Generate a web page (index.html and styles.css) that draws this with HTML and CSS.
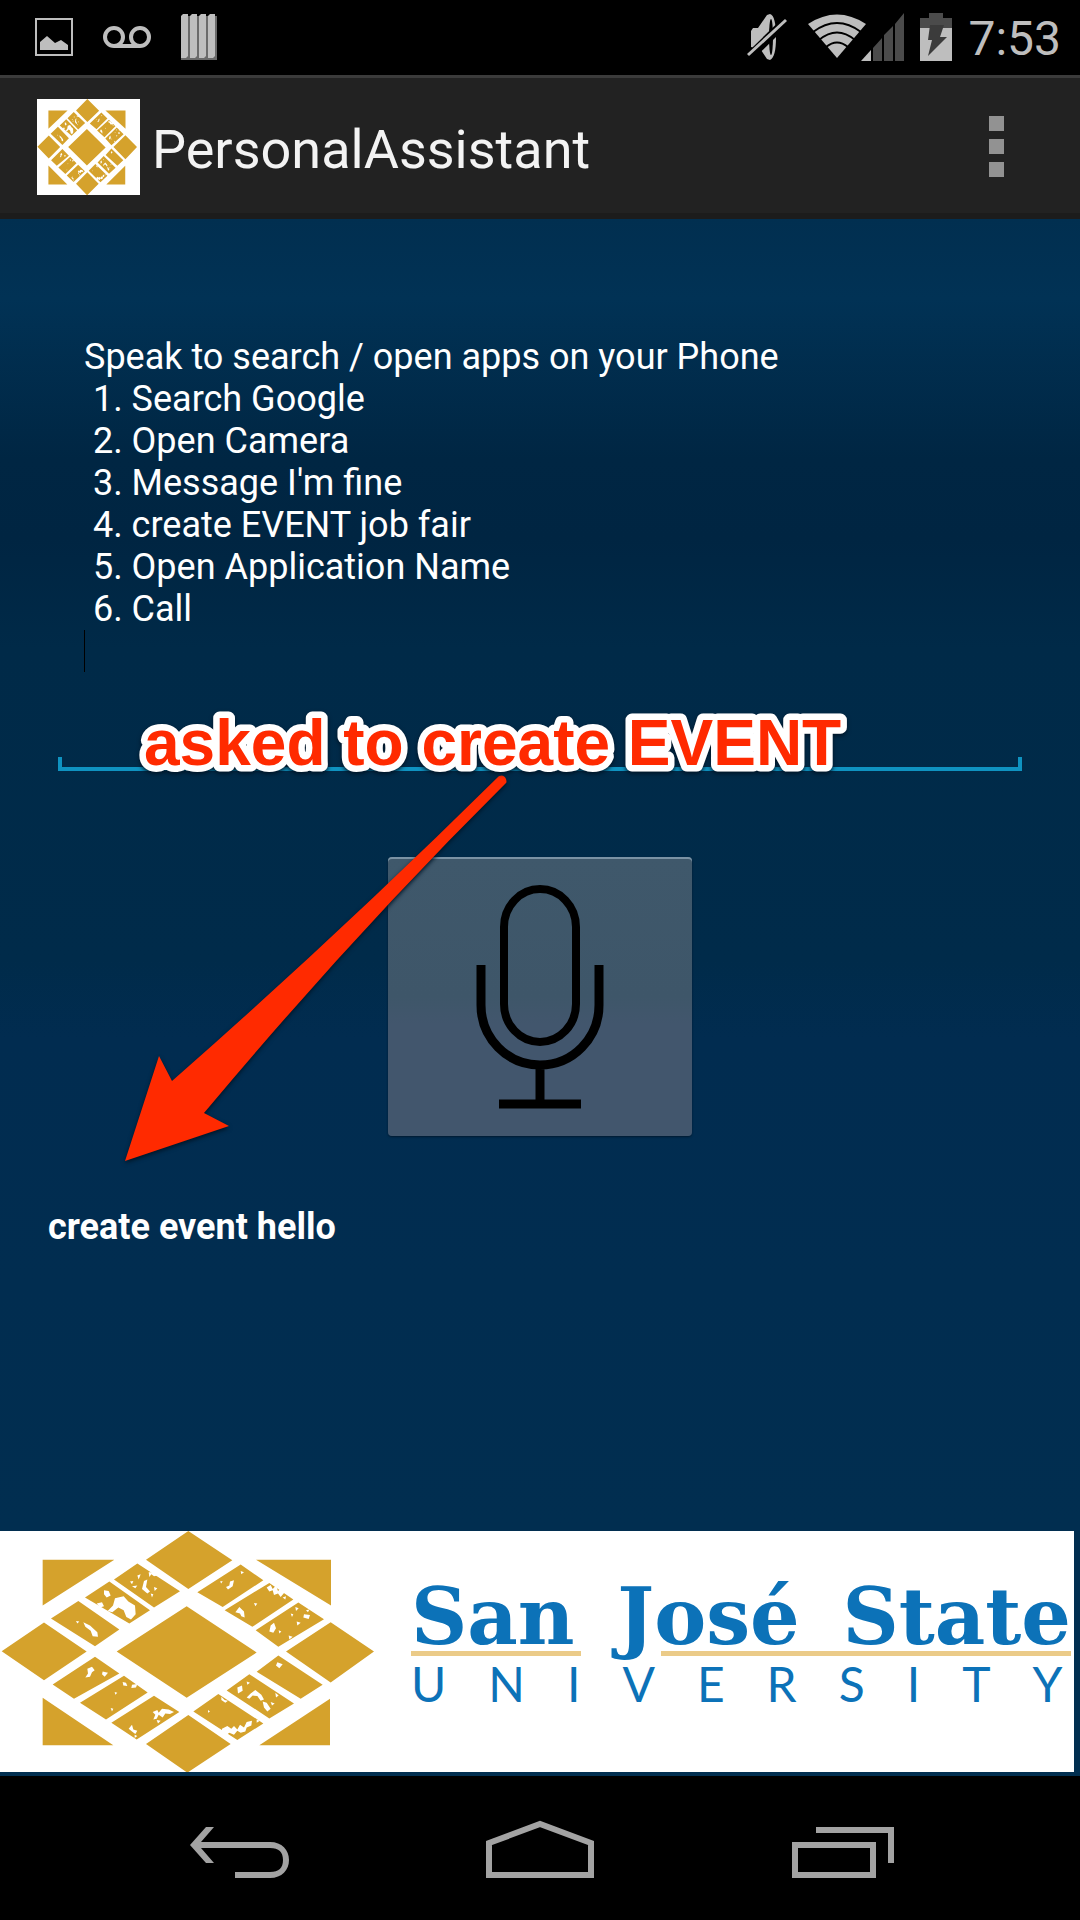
FILE: index.html
```html
<!DOCTYPE html>
<html lang="en">
<head>
<meta charset="utf-8">
<meta name="viewport" content="width=device-width, initial-scale=1">
<title>PersonalAssistant</title>
<link rel="stylesheet" href="styles.css">
</head>
<body>
<svg class="defs" aria-hidden="true">
  <symbol id="emblem" viewBox="0 62 1122 724" preserveAspectRatio="none">
    <g fill="#d5a22c">
      <path d="M565 62 697 150 565 236 438 148ZM5 423 132 337 260 424 132 510ZM858 424 992 336 1122 424 992 517ZM565 615 692 702 562 788 438 702ZM560 288 770 427 560 563 350 424Z"/>
      <path d="M128 148H343L128 286ZM768 148H993V286ZM128 563 340 706H128ZM990 566V706H778Z"/>
      <path d="M412 160 540 243 462 292 342 208ZM328 214 450 300 388 340 255 262ZM235 272 358 358 285 408 153 325Z"/>
      <path d="M722 163 790 210 668 290 592 246ZM808 218 880 268 757 350 674 300ZM895 277 972 327 835 410 767 360Z"/>
      <path d="M285 440 358 490 222 566 158 523ZM372 497 443 547 318 628 240 578ZM462 557 538 606 410 688 334 638Z"/>
      <path d="M835 436 968 524 902 566 770 485ZM748 492 882 580 808 625 680 541ZM655 552 790 640 712 690 580 604Z"/>
    </g>
    <g fill="#fff">
      <path d="M345 264l26-6 14 16 20 12 2 26-14 16-14-8-8-20-16-8-18 14-14-4 16-16zM312 240l14 2 6 14-12 6-8-10zM290 280l16-4 6 12-12 4zM432 212l10-4-4 22 12 14-8 6-16-14zM446 186l18 0 8 10-10 2-8-6-6 8zM412 196l10-4-6 16zM390 214l10-2-4 10zM462 230l10 4-8 8zM452 250l8 2-4 10zM396 228l16-2-6 8zM250 336l20 10 22 20 2 14-16-2-6-16-16-12zM228 332l10 2-6 6z"/>
      <path d="M690 214l12-4-4 18-14 10-6-8 10-4zM722 182l10 4-8 6zM660 214l8-2-4 8zM706 306l12-16 14 14 2 18-10-4-4-8zM762 278l10 2-6 8zM800 232l12-8 6 12 10-10 6 16 12-10 8 14-12 14-8-10-12 4-4-14-10 4zM848 262l10-4-2 10zM812 346l10-8 6 16-8 14-12-4zM866 376l12 4-10 8zM886 290l10 4-8 8zM912 312l18 2-4 12-16-4zM872 310l8 2-4 8zM890 334l12 4-10 8zM918 300l10-2-4 8zM836 360l8 4-6 6z"/>
      <path d="M262 476l14-6 8 10-8 6-6 14-14 2 8-12zM308 484l16 4-10 12-8-8zM368 516l10 2 4 10-12-2zM396 524l16-2-4 10-14 2zM344 546l8 2-6 6zM332 594l8 2-4 8zM458 606l14-6 4 8 10-12 20 2 16 8-12 6-14-2-8 12-12-8-6 12-10 2 6-14zM470 630l12 2-8 8zM386 656l10-12 4 14 12 4-6 10-10-8zM404 674l8 4-8 6z"/>
      <path d="M832 456l16 6-10 12-10-8zM712 532l14-6 2 16-14 8zM752 550l14-10 18 14 8 14-10 4-10-14-14-2-10 10-8-4zM788 574l12 4 12 18-10 8-10-12zM826 548l10 8-8 6zM812 576l12 4-8 6zM740 514l10 4-8 6zM664 560l10 10 10 2-8 6-12-8zM666 656l16-8 12 8 8-8 10 10 8-14 12 8 8-16 16-4-2 14-14 6-4 12-14 4-10-6-10 12-14-6-8 6-14-6zM770 628l10 4-10 6zM624 600l6 4-6 4z"/>
    </g>
  </symbol>
</svg>

<div class="screen">
  <header class="status">
    <div class="status-group status-left">
      <svg width="38" height="38" viewBox="0 0 38 38" aria-hidden="true"><path fill="none" stroke="#bebebe" stroke-width="2" d="M1 1h36v36H1z"/><path fill="#bebebe" d="M5 32V24l7-6 8 7 6-3 7 5v5z"/></svg>
      <svg width="48" height="22" viewBox="0 0 48 22" fill="none" stroke="#bebebe" stroke-width="4" aria-hidden="true"><circle cx="11" cy="11" r="9"/><circle cx="37" cy="11" r="9"/><path d="M11 20h26"/></svg>
      <svg width="36" height="46" viewBox="0 0 36 46" aria-hidden="true"><path fill="#6a6a6a" d="M0 2H36V46H0z"/><path fill="#bebebe" d="M0 2l2-2h5v42l-2 2H0zM9 2l2-2h5v42l-2 2H9zM18 2l2-2h5v42l-2 2h-5zM27 2l2-2h5v42l-2 2h-5z"/></svg>
    </div>
    <div class="status-group status-right">
      <svg width="40" height="46" viewBox="0 0 40 46" aria-hidden="true"><path fill="#bebebe" d="M4 17l2-3h5L20 1l3-1c4 1 6 9 6 23s-2 21-6 23l-3-1-6-9-10-3z"/><ellipse cx="24" cy="23" rx="2" ry="18" fill="#000"/><path stroke="#000" stroke-width="9" d="M1 44 40 6"/><path stroke="#bebebe" stroke-width="3" d="M1 41 39 6"/></svg>
      <svg class="wifi" width="60" height="46" viewBox="0 0 60 46" aria-hidden="true"><path fill="#bebebe" d="M1 10Q30-9 59 10L30 44z"/><g fill="none" stroke="#000" stroke-width="2"><path d="M6 18Q30 0 54 18M12 26Q30 11 48 26M19 33Q30 24 41 33"/></g></svg>
      <svg class="signal" width="44" height="48" viewBox="0 0 44 48" aria-hidden="true"><path fill="#bebebe" d="M0 48 10 37V48z"/><path fill="#4b4b4b" d="M12 35l9-10v23h-9zM23 22l9-9v35h-9zM34 11 43 0V48h-9z"/></svg>
      <svg class="battery" width="32" height="48" viewBox="0 0 32 48" aria-hidden="true"><path fill="#4b4b4b" d="M9 0h14v5h9v10H0V5h9z"/><path fill="#bebebe" d="M0 15h32v33H0z"/><path fill="#3b3b3b" d="M10 12h14l-4 12h7L8 43l4-16H8z"/></svg>
      <time class="clock">7:53</time>
    </div>
  </header>

  <div class="action-bar">
    <svg class="app-icon" viewBox="0 0 103 96" role="img" aria-label="San José State emblem"><path fill="#fff" d="M0 0h103v96H0z"/><use href="#emblem" width="100" height="96"/></svg>
    <h1 class="title">PersonalAssistant</h1>
    <button class="overflow" type="button" aria-label="More options"><i></i><i></i><i></i></button>
  </div>

  <main class="content">
    <div class="field">
      <textarea class="prompt" aria-label="Voice commands" spellcheck="false">Speak to search / open apps on your Phone
 1. Search Google
 2. Open Camera
 3. Message I'm fine
 4. create EVENT job fair
 5. Open Application Name
 6. Call
</textarea>
      <span class="caret"></span>
    </div>

    <button class="mic" type="button" aria-label="Speak">
      <svg width="130" height="226" viewBox="0 0 130 226" fill="none" stroke="#000" aria-hidden="true"><rect x="29" y="5" width="72" height="153" rx="36" ry="38" stroke-width="8"/><path stroke-width="9" d="M6 81v40c0 33 26 60 59 60s59-27 59-60V81M65 181v38M24 220h82"/></svg>
    </button>

    <p class="result">create event hello</p>

    <div class="banner">
      <svg class="banner-emblem" aria-hidden="true"><use href="#emblem" width="374" height="241"/></svg>
      <div class="wordmark">
        <div class="name"><span>San</span> <span>José</span> <span>State</span></div>
        <div class="rules"><i class="rule-short"></i><i class="rule-long"></i></div>
        <div class="kind">UNIVERSIT<span class="last">Y</span></div>
      </div>
    </div>

    <svg class="arrow" width="400" height="400" viewBox="0 0 400 400" aria-hidden="true"><path fill="#ff2a00" d="M5 386 39 281 52 306Q215 163 379 1Q384-1 386 4Q387 7 386 8Q232 161 84 338L109 351Z"/></svg>
    <svg class="note" width="720" height="90"><text x="10" y="60">asked to create EVENT</text></svg>
  </main>

  <nav class="nav" aria-label="System">
    <button type="button" aria-label="Back"><svg width="108" height="58" viewBox="0 0 108 58" aria-hidden="true"><path fill="#a3a3a3" d="M4 25 20 7h8L15 22h69c12 0 19 8 19 18s-7 18-19 18H49v-6h35c9 0 13-4 13-12s-4-12-13-12H15l13 15h-8z"/></svg></button>
    <button type="button" aria-label="Home"><svg width="108" height="58" viewBox="0 0 108 58" aria-hidden="true"><path fill="none" stroke="#a3a3a3" stroke-width="6" d="M3 23 54 4l51 19v32H3z"/></svg></button>
    <button type="button" aria-label="Recent apps"><svg width="108" height="58" viewBox="0 0 108 58" fill="none" stroke="#a3a3a3" stroke-width="6" aria-hidden="true"><path d="M9 25h78v30H9zM30 10h75v33"/></svg></button>
  </nav>
</div>
</body>
</html>
```
FILE: styles.css
```css
* { box-sizing: border-box; }
body { margin: 0; background: #000; font-family: Roboto, "Liberation Sans", sans-serif; }
button { margin: 0; padding: 0; border: 0; background: none; font: inherit; }
svg { display: block; flex: none; }
.defs { position: absolute; width: 0; height: 0; }

.screen { display: flex; flex-direction: column; min-height: 100vh; }

.status { display: flex; justify-content: space-between; align-items: center; height: 75px; padding: 0 19px 2px 35px; color: #bebebe; }
.status-group { display: flex; align-items: center; }
.status-left { gap: 30px; }
.wifi { margin-left: 20px; }
.signal { margin-left: -6px; }
.battery { margin-left: 15px; }
.clock { margin-left: 16px; padding-top: 4px; font-size: 48px; line-height: 56px; }

.action-bar { display: flex; align-items: center; height: 144px; padding: 2px 76px 0 37px; border-top: 3px solid #3b3b3b; border-bottom: 6px solid #1c1c1c; background: #222; }
.app-icon { width: 103px; height: 96px; }
.title { flex: 1; margin: 0; padding: 6px 0 0 12px; color: #f3f3f3; font-size: 54px; font-weight: 400; line-height: 64px; }
.overflow { display: flex; flex-direction: column; gap: 8px; }
.overflow i { width: 15px; height: 15px; background: #929292; }

.content {
  position: relative;
  flex: 1;
  display: flex;
  flex-direction: column;
  align-items: center;
  padding: 117px 0 4px;
  background: linear-gradient(#012f50 0, #013255 80px, #002643 240px, #002542 320px, #002a48 430px, #002b4a 740px, #012c50 820px, #012f50 100%);
}
.field { position: relative; align-self: stretch; margin: 0 58px; }
.prompt {
  display: block;
  width: 100%;
  height: 435px;
  padding: 0 26px;
  border: 0;
  border-bottom: 4px solid #0f93c1;
  background: linear-gradient(#0f93c1, #0f93c1) left bottom / 4px 10px no-repeat, linear-gradient(#0f93c1, #0f93c1) right bottom / 4px 10px no-repeat;
  color: #fff;
  font: 36px/42px Roboto, sans-serif;
  resize: none;
  outline: 0;
  overflow: hidden;
}
.caret { position: absolute; left: 26px; top: 294px; width: 1px; height: 42px; background: #000; }

.mic {
  display: flex;
  align-items: center;
  justify-content: center;
  width: 304px;
  height: 279px;
  margin-top: 86px;
  border-radius: 4px;
  background: linear-gradient(#3f586b, #3e5669 50%, #42566d 60%, #42566d);
  box-shadow: inset 0 2px 0 #7b93a5, 0 1px 2px #001a30;
}
.result { align-self: flex-start; margin: 70px 48px 0; color: #fff; font-size: 36px; font-weight: 700; line-height: 42px; }

.banner { align-self: stretch; display: flex; height: 241px; margin: auto 6px 0 0; background: #fff; }
.banner-emblem { width: 374px; height: 241px; }
.wordmark { flex: 1; min-width: 0; margin: 54px 3px 0 37px; color: #0c72b8; white-space: nowrap; }
.name { display: flex; justify-content: space-between; font: 700 78px/64px "DejaVu Serif", serif; }
.rules { display: flex; justify-content: space-between; margin-top: 2px; }
.rules i { height: 5px; background: #ebcb88; }
.rule-short { width: 170px; }
.rule-long { width: 410px; }
.kind { font: 48px/56px Lato, sans-serif; letter-spacing: 42px; }
.last { letter-spacing: 0; }

.note {
  position: absolute;
  left: 134px;
  top: 486px;
  overflow: visible;
  filter: drop-shadow(0 2px 2px #001425);
}
.note text {
  fill: #ff2a00;
  stroke: #fff;
  stroke-width: 13px;
  stroke-linejoin: round;
  paint-order: stroke fill;
  font: 700 64px "Liberation Sans", Arial, sans-serif;
}
.arrow { position: absolute; left: 120px; top: 556px; overflow: visible; filter: drop-shadow(0 2px 2px #001425); }

.nav { display: flex; justify-content: center; gap: 192px; height: 144px; padding-top: 44px; background: #000; }
.nav button { align-self: flex-start; }
```
